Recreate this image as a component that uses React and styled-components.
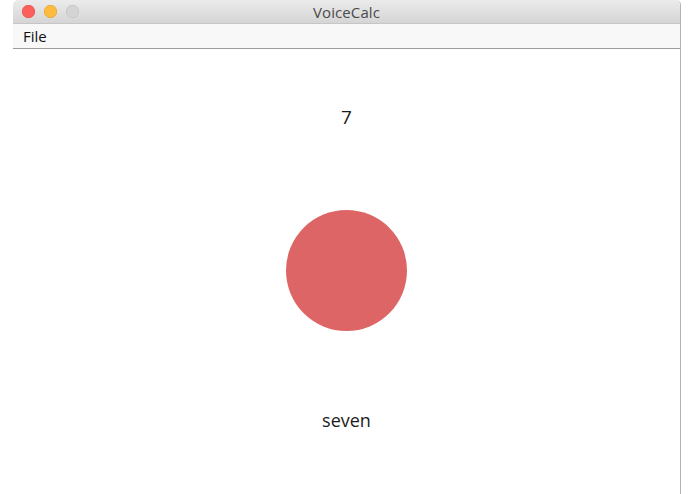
import React from "react";
import styled, { createGlobalStyle } from "styled-components";

const GlobalStyle = createGlobalStyle`
  html, body {
    margin: 0;
    padding: 0;
    background: #ffffff;
  }
  body {
    font-family: "Open Sans", "DejaVu Sans", sans-serif;
  }
`;

const Screen = styled.div`
  display: flex;
  width: 695px;
  height: 494px;
  padding-left: 13px;
  box-sizing: border-box;
  background: #ffffff;
  overflow: hidden;
`;

const Window = styled.div`
  display: flex;
  flex-direction: column;
  width: 668px;
  height: 100%;
  border-right: 1px solid #b4b4b4;
  border-top-left-radius: 5px;
  border-top-right-radius: 5px;
  box-sizing: border-box;
  background: #ffffff;
`;

const TitleBar = styled.div`
  position: relative;
  display: flex;
  align-items: center;
  justify-content: center;
  height: 23px;
  flex-shrink: 0;
  border-bottom: 1px solid #c6c6c6;
  border-top-left-radius: 5px;
  border-top-right-radius: 5px;
  background: linear-gradient(#ebebeb, #d5d5d5);
`;

const Lights = styled.div`
  position: absolute;
  left: 9px;
  top: 5px;
  display: flex;
  gap: 9px;
`;

const Light = styled.span`
  width: 13px;
  height: 13px;
  border-radius: 50%;
  background: ${(p) => p.color};
  box-shadow: inset 0 0 0 0.5px ${(p) => p.edge};
`;

const Title = styled.div`
  font-family: "Open Sans", sans-serif;
  font-size: 15px;
  color: #4a4a4a;
  letter-spacing: 0.1px;
`;

const MenuBar = styled.div`
  display: flex;
  align-items: center;
  height: 24px;
  flex-shrink: 0;
  padding-left: 10px;
  background: #f8f8f8;
  border-bottom: 1px solid #9c9c9c;
`;

const MenuItem = styled.span`
  font-family: "Open Sans", sans-serif;
  font-size: 15px;
  color: #111111;
`;

const Content = styled.div`
  flex: 1;
  display: flex;
  flex-direction: column;
  align-items: center;
  padding-top: 57px;
`;

const Result = styled.div`
  font-family: "Open Sans", sans-serif;
  font-size: 19px;
  line-height: 22px;
  color: #1c1c1c;
`;

const MicButton = styled.div`
  width: 121px;
  height: 121px;
  margin-top: 82px;
  border-radius: 50%;
  background: #dd6565;
`;

const Spoken = styled.div`
  margin-top: 78px;
  font-family: "Open Sans", sans-serif;
  font-size: 18px;
  line-height: 22px;
  color: #1c1c1c;
`;

export default function App() {
  return (
    <>
      <GlobalStyle />
      <Screen>
        <Window>
          <TitleBar>
            <Lights>
              <Light color="#fc605b" edge="#de4a44" />
              <Light color="#fdbc40" edge="#dea034" />
              <Light color="#d4d4d4" edge="#bdbdbd" />
            </Lights>
            <Title>VoiceCalc</Title>
          </TitleBar>
          <MenuBar>
            <MenuItem>File</MenuItem>
          </MenuBar>
          <Content>
            <Result>7</Result>
            <MicButton />
            <Spoken>seven</Spoken>
          </Content>
        </Window>
      </Screen>
    </>
  );
}
